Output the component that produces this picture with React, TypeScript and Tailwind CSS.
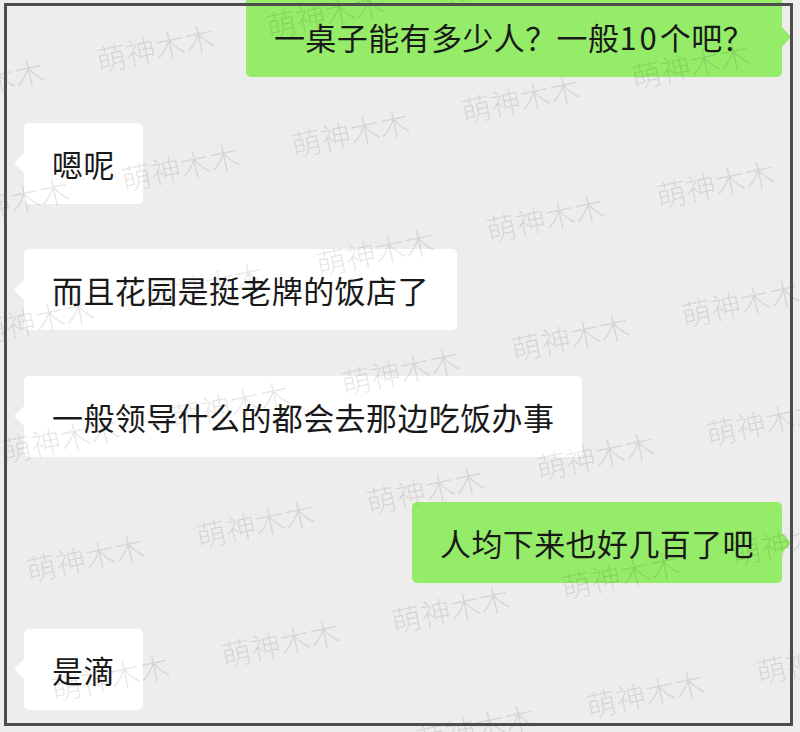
import React from 'react';

// Messages du fil de discussion
type Message = { side: 'left' | 'right'; text: React.ReactNode };

const MESSAGES: Message[] = [
  {
    side: 'right',
    text: (
      <>
        一桌子能有多少人？一般<span className="tracking-[3px]">10</span>个吧？
      </>
    ),
  },
  { side: 'left', text: '嗯呢' },
  { side: 'left', text: '而且花园是挺老牌的饭店了' },
  { side: 'left', text: '一般领导什么的都会去那边吃饭办事' },
  { side: 'right', text: '人均下来也好几百了吧' },
  { side: 'left', text: '是滴' },
];

const FONT = '"Noto Sans CJK SC", "Noto Sans", sans-serif';

function Bubble({ side, text }: Message) {
  const isRight = side === 'right';
  return (
    <div className={isRight ? 'flex justify-end' : 'flex justify-start'}>
      <div
        className={
          'relative h-[81px] flex items-center px-[28px] rounded-[5px] text-[31px] tracking-[0.4px] leading-[43px] text-[#191919] whitespace-nowrap ' +
          (isRight ? 'bg-[#95ec69]' : 'bg-white')
        }
      >
        <span>{text}</span>
        {isRight ? (
          <span className="absolute right-[-9px] top-1/2 -translate-y-1/2 w-0 h-0 border-y-[10px] border-y-transparent border-l-[9px] border-l-[#95ec69]" />
        ) : (
          <span className="absolute left-[-10px] top-1/2 -translate-y-1/2 w-0 h-0 border-y-[10px] border-y-transparent border-r-[10px] border-r-white" />
        )}
      </div>
    </div>
  );
}

// Filigrane "萌神木木" répété en grille inclinée
function Watermark() {
  const marks: { x: number; y: number }[] = [];
  for (let m = -4; m <= 6; m++) {
    for (let n = -1; n <= 7; n++) {
      const x = 155 + 170 * m + 25 * n;
      const y = 47 - 34 * m + 119 * n;
      if (x > -90 && x < 890 && y > -40 && y < 780) marks.push({ x, y });
    }
  }
  return (
    <div className="absolute inset-0 overflow-hidden pointer-events-none">
      {marks.map((p, i) => (
        <span
          key={i}
          className="absolute whitespace-nowrap -translate-x-1/2 -translate-y-1/2 -rotate-12 text-[30px] leading-none font-light text-[rgba(0,0,0,0.11)]"
          style={{ left: p.x, top: p.y }}
        >
          萌神木木
        </span>
      ))}
    </div>
  );
}

export default function App() {
  return (
    <div
      className="relative w-[800px] h-[732px] overflow-hidden bg-[#ededed]"
      style={{ fontFamily: FONT }}
    >
      <div className="flex flex-col gap-[45.6px] mt-[-4px] pl-[24px] pr-[18px]">
        {MESSAGES.map((msg, i) => (
          <Bubble key={i} {...msg} />
        ))}
      </div>

      <Watermark />

      {/* Cadre sombre */}
      <div className="absolute left-[4px] top-[3px] w-[789px] h-[723px] border-[3px] border-[#4d4d4d] pointer-events-none" />
    </div>
  );
}
